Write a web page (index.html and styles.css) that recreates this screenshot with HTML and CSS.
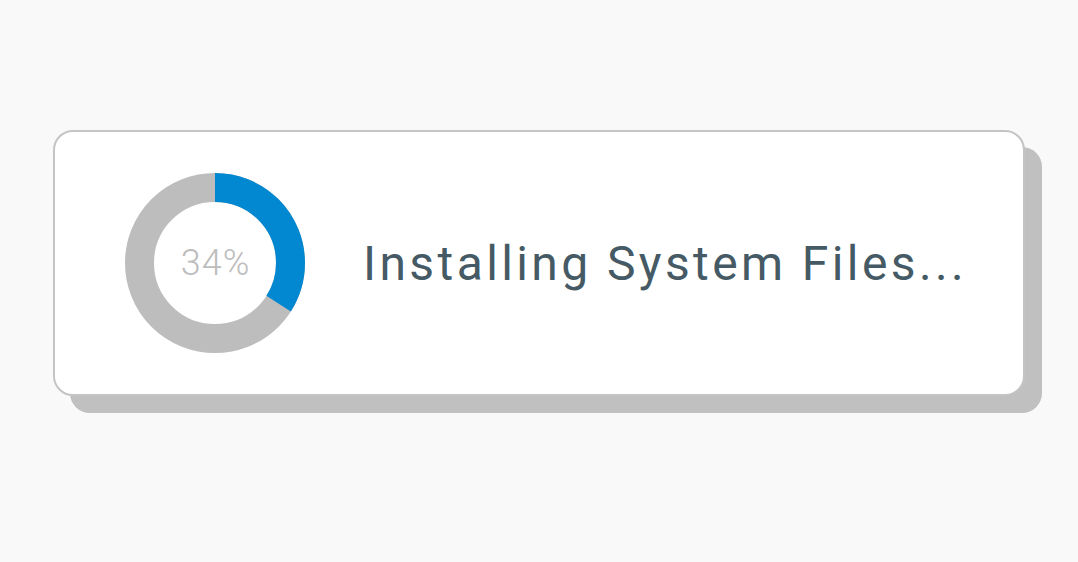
FILE: index.html
```html
<!DOCTYPE html>
<html lang="en">
<head>
    <meta charset="UTF-8">
    <meta name="viewport" content="width=device-width, initial-scale=1.0">
    <title>Installing</title>
    <link rel="stylesheet" href="styles.css">
</head>
<body>
    <div class="page">
        <div class="card">
            <div class="progress">
                <svg class="ring" width="180" height="180" viewBox="0 0 180 180">
                    <circle cx="90" cy="90" r="75.5" fill="none" stroke="#bdbdbd" stroke-width="29"/>
                    <circle cx="90" cy="90" r="75.5" fill="none" stroke="#0288d1" stroke-width="29"
                        stroke-dasharray="161.3 313.1" transform="rotate(-90 90 90)"/>
                </svg>
                <span class="percent">34%</span>
            </div>
            <div class="status">Installing System Files...</div>
        </div>
    </div>
</body>
</html>
```
FILE: styles.css
```css
body {
	padding: 0;
	margin: 0;
	background-color: #f9f9f9;
	font-family: Roboto, "Liberation Sans", sans-serif;
}

.page {
	box-sizing: border-box;
	min-height: 100vh;
	padding: 130px 0 0 53px;
}

.card {
	display: flex;
	align-items: center;
	box-sizing: border-box;
	width: 972px;
	height: 266px;
	padding-left: 70px;
	background-color: #fff;
	border: 2px solid #c4c4c4;
	border-radius: 20px;
	box-shadow: 17px 17px 0 #c0c0c0;
}

.progress {
	position: relative;
	width: 180px;
	height: 180px;
}

.ring {
	display: block;
}

.percent {
	position: absolute;
	inset: 0;
	display: flex;
	align-items: center;
	justify-content: center;
	padding-left: 1px;
	font-size: 36px;
	font-weight: 300;
	letter-spacing: 1px;
	color: #bdbdbd;
}

.status {
	margin-left: 58px;
	font-size: 48px;
	letter-spacing: 3.4px;
	color: #455a64;
}
```
